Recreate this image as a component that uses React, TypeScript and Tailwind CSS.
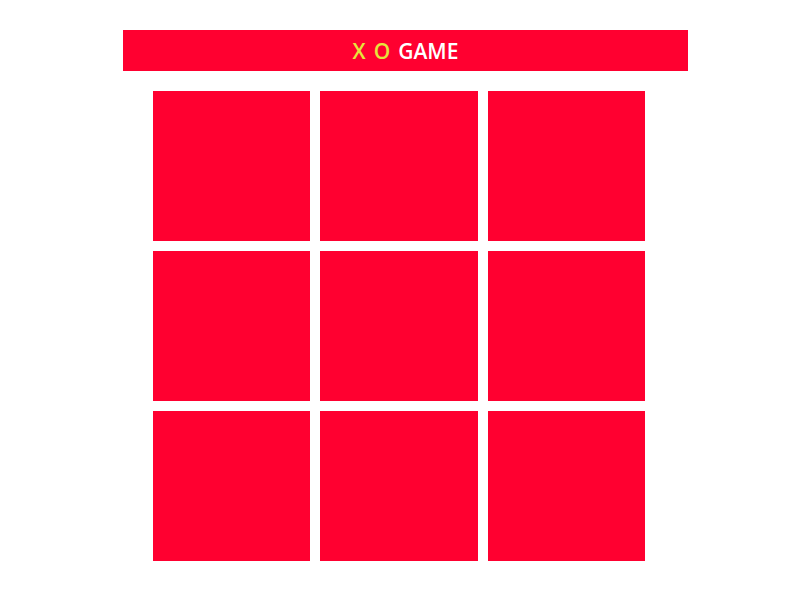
const cells = [0, 1, 2, 3, 4, 5, 6, 7, 8]

export default function App() {
  return (
    <div className="min-h-screen bg-white pt-[30px] font-['Open_Sans',sans-serif]">
      {/* Title bar */}
      <div className="ml-[123px] flex h-[41px] w-[565px] items-center justify-center bg-[#ff0030] pt-[2px] text-[21px] font-semibold">
        <span className="text-[#e6e43c]">X</span>
        <span className="ml-[8px] text-[#e6e43c]">O</span>
        <span className="ml-[8px] text-white">GAME</span>
      </div>

      {/* Board */}
      <div className="ml-[153px] mt-[20px] grid w-[492px] grid-cols-3 gap-[10px]">
        {cells.map((i) => (
          <div key={i} className="h-[150px] bg-[#ff0030]"></div>
        ))}
      </div>
    </div>
  )
}
